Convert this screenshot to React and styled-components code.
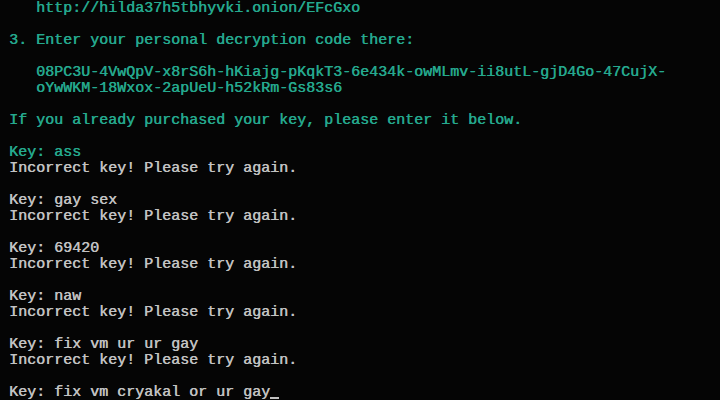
import React from 'react';
import styled, { createGlobalStyle } from 'styled-components';

const GlobalStyle = createGlobalStyle`
  html, body {
    margin: 0;
    padding: 0;
    background: #050505;
  }
`;

const Screen = styled.div`
  width: 720px;
  height: 400px;
  overflow: hidden;
  background: #050505;
  font-family: 'Liberation Mono', 'DejaVu Sans Mono', monospace;
  font-size: 15px;
  line-height: 16px;
  display: flex;
  flex-direction: column;
  padding-top: 1px;
  box-sizing: border-box;
`;

const Line = styled.div`
  height: 16px;
  flex-shrink: 0;
  white-space: pre;
  padding-left: ${p => (p.$col || 0) * 9}px;
  color: ${p => (p.$tone === 'gray' ? '#c2c2c2' : '#25a98e')};
  text-shadow: 0.4px 0 0 currentColor;
`;

const Cursor = styled.span`
  display: inline-block;
  width: 9px;
  height: 16px;
  vertical-align: top;
  position: relative;

  &::after {
    content: '';
    position: absolute;
    left: 0;
    right: 0;
    bottom: 2px;
    height: 2px;
    background: #c2c2c2;
  }
`;

const attempts = ['gay sex', '69420', 'naw', 'fix vm ur ur gay'];

const App = () => (
  <>
    <GlobalStyle />
    <Screen>
      <Line $col={4}>http://hilda37h5tbhyvki.onion/EFcGxo</Line>
      <Line />
      <Line $col={1}>3. Enter your personal decryption code there:</Line>
      <Line />
      <Line $col={4}>
        08PC3U-4VwQpV-x8rS6h-hKiajg-pKqkT3-6e434k-owMLmv-ii8utL-gjD4Go-47CujX-
      </Line>
      <Line $col={4}>oYwWKM-18Wxox-2apUeU-h52kRm-Gs83s6</Line>
      <Line />
      <Line $col={1}>If you already purchased your key, please enter it below.</Line>
      <Line />
      <Line $col={1}>Key: ass</Line>
      <Line $col={1} $tone='gray'>Incorrect key! Please try again.</Line>
      {attempts.map(a => (
        <React.Fragment key={a}>
          <Line />
          <Line $col={1} $tone='gray'>Key: {a}</Line>
          <Line $col={1} $tone='gray'>Incorrect key! Please try again.</Line>
        </React.Fragment>
      ))}
      <Line />
      <Line $col={1} $tone='gray'>
        Key: fix vm cryakal or ur gay<Cursor />
      </Line>
    </Screen>
  </>
);

export default App;
